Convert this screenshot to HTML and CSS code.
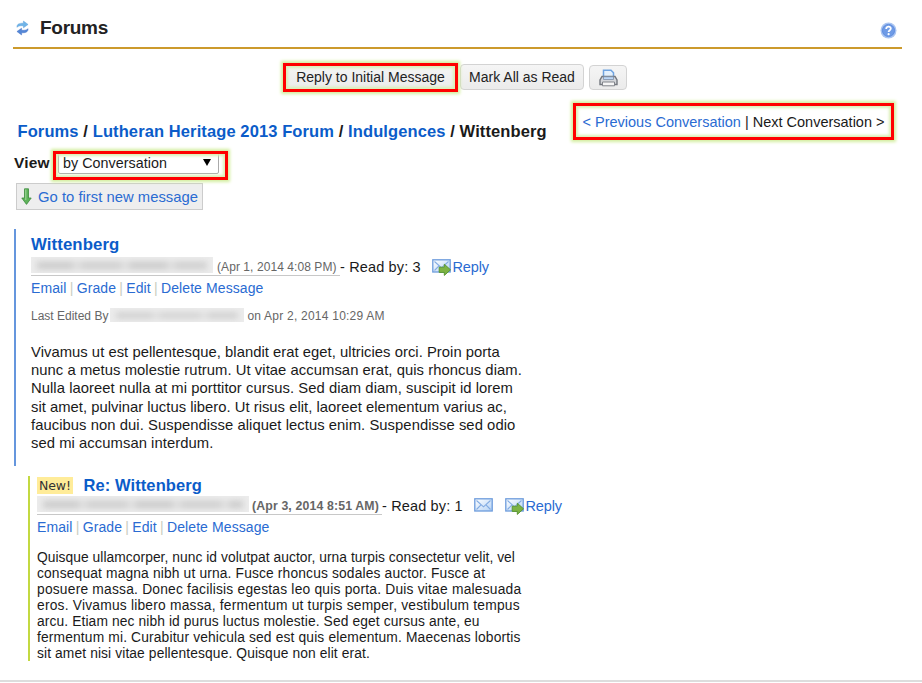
FILE: index.html
```html
<!DOCTYPE html>
<html lang="en">
<head>
<meta charset="utf-8">
<title>Forums</title>
<link rel="stylesheet" href="styles.css">
</head>
<body>
<svg class="defs" width="0" height="0" aria-hidden="true">
  <defs>
    <linearGradient id="sky" x1="0" y1="0" x2="1" y2="1"><stop offset="0" stop-color="#fff"/><stop offset="1" stop-color="#b4d2f5"/></linearGradient>
    <symbol id="mail" viewBox="0 0 19 14">
      <rect x=".8" y=".8" width="17.4" height="12.2" fill="url(#sky)" stroke="#6c9bdc" stroke-width="1.3"/>
      <path d="M2.5 2.5 L9.5 8.8 L16.5 2.5 M2.5 11.5 L7 6.8 M16.5 11.5 L12 6.8" fill="none" stroke="#82abe2" stroke-width="1.1"/>
    </symbol>
    <symbol id="reply" viewBox="0 0 19 17">
      <rect x=".8" y=".8" width="17.4" height="12.2" fill="url(#sky)" stroke="#6c9bdc" stroke-width="1.3"/>
      <path d="M2.5 2.5 L9.5 8.8 L16.5 2.5 M2.5 11.5 L7 6.8" fill="none" stroke="#82abe2" stroke-width="1.1"/>
      <path d="M7.2 8.2 H12.3 V5.2 L18.5 10.8 L12.3 16.4 V13.4 H7.2 Z" fill="#7db343" stroke="#5a9634" stroke-width="1"/>
    </symbol>
  </defs>
</svg>
<header class="header">
  <svg class="sync" viewBox="0 0 14 16"><path d="M1 7.2 C1 3.6 3.5 2.8 8 2.8 V.5 L13 4.2 L8 7.8 V5.6 C5 5.4 3 5.4 1 7.2Z" fill="#6fb4e8" stroke="#5a9edb" stroke-width=".5"/><path d="M13 8.8 C13 12.4 10.5 13.2 6 13.2 V15.5 L1 11.8 L6 8.2 V10.4 C9 10.6 11 10.6 13 8.8Z" fill="#5487d6" stroke="#416fc4" stroke-width=".5"/></svg>
  <h1 class="title">Forums</h1>
  <svg class="help" viewBox="0 0 17 17"><circle cx="8.5" cy="8.5" r="8" fill="#a9c4f1"/><circle cx="8.5" cy="8.5" r="6.1" fill="#6f9be6" stroke="#5485dc" stroke-width=".8"/><path d="M6.2 6.9 C6.2 3.7 11 3.9 10.8 6.8 C10.7 8.2 8.6 8.2 8.6 10" fill="none" stroke="#fff" stroke-width="1.8"/><circle cx="8.6" cy="12.2" r="1.1" fill="#fff"/></svg>
</header>
<div class="toolbar">
  <button class="btn btn-reply mark">Reply to Initial Message</button>
  <button class="btn btn-read">Mark All as Read</button>
  <button class="btn btn-print" aria-label="Print"><svg viewBox="0 0 19 18"><path d="M4.5 8 V1.2 H12 L14.5 3.7 V8Z" fill="#e3f0fd" stroke="#6fa3e0" stroke-width="1.5"/><path d="M3 7.5 H16 L18 11 V15.5 H1 V11Z" fill="#d4d6da" stroke="#73777e" stroke-width="1.4"/><path d="M4.5 7.8 H14.5 V10.5 H4.5Z" fill="#bcd7f6" stroke="#7d8fa8" stroke-width=".8"/><path d="M3.5 13 H15.5 V16.8 H3.5Z" fill="#f6f6f6" stroke="#83868c"/></svg></button>
</div>
<div class="crumb-row">
  <nav class="crumbs"><a>Forums</a> / <a>Lutheran Heritage 2013 Forum</a> / <a>Indulgences</a> / Wittenberg</nav>
  <nav class="pager mark"><a>&lt; Previous Conversation</a> | Next Conversation &gt;</nav>
</div>
<div class="view-row">
  <label class="view">View</label>
  <div class="select-wrap mark"><div class="select">by Conversation<svg class="caret" viewBox="0 0 8 7"><path d="M0 0 H8 L4 7Z"/></svg></div></div>
</div>
<a class="first-new"><svg viewBox="0 0 11 17"><path d="M3.5 .8 H7.5 V10 H10.2 L5.5 16.4 L.8 10 H3.5Z" fill="#5fb35a" stroke="#3c8a3d" stroke-width=".8"/><path d="M4.8 1.5 V12" stroke="#a5dba0" stroke-width="1"/></svg>Go to first new message</a>
<article class="post post-main">
  <h2>Wittenberg</h2>
  <div class="meta"><div class="author"><i class="hidden-name n1"></i><span class="date">(Apr 1, 2014 4:08 PM)</span></div><span class="read">- Read by: 3</span><svg class="ico-reply"><use href="#reply"/></svg><a class="reply">Reply</a></div>
  <div class="actions"><a>Email</a> <s>|</s> <a>Grade</a> <s>|</s> <a>Edit</a> <s>|</s> <a>Delete Message</a></div>
  <div class="edited"><span>Last Edited By</span><i class="hidden-name n2"></i><span class="edit-date">on Apr 2, 2014 10:29 AM</span></div>
  <p class="body">
    <span>Vivamus ut est pellentesque, blandit erat eget, ultricies orci. Proin porta</span>
    <span>nunc a metus molestie rutrum. Ut vitae accumsan erat, quis rhoncus diam.</span>
    <span>Nulla laoreet nulla at mi porttitor cursus. Sed diam diam, suscipit id lorem</span>
    <span>sit amet, pulvinar luctus libero. Ut risus elit, laoreet elementum varius ac,</span>
    <span>faucibus non dui. Suspendisse aliquet lectus enim. Suspendisse sed odio</span>
    <span>sed mi accumsan interdum.</span>
  </p>
</article>
<article class="post post-child">
  <h2><span class="new">New!</span>Re: Wittenberg</h2>
  <div class="meta"><div class="author"><i class="hidden-name n3"></i><span class="date">(Apr 3, 2014 8:51 AM)</span></div><span class="read">- Read by: 1</span><svg class="ico-mail"><use href="#mail"/></svg><svg class="ico-reply"><use href="#reply"/></svg><a class="reply">Reply</a></div>
  <div class="actions"><a>Email</a> <s>|</s> <a>Grade</a> <s>|</s> <a>Edit</a> <s>|</s> <a>Delete Message</a></div>
  <p class="body2">
    <span>Quisque ullamcorper, nunc id volutpat auctor, urna turpis consectetur velit, vel</span>
    <span>consequat magna nibh ut urna. Fusce rhoncus sodales auctor. Fusce at</span>
    <span>posuere massa. Donec facilisis egestas leo quis porta. Duis vitae malesuada</span>
    <span>eros. Vivamus libero massa, fermentum ut turpis semper, vestibulum tempus</span>
    <span>arcu. Etiam nec nibh id purus luctus molestie. Sed eget cursus ante, eu</span>
    <span>fermentum mi. Curabitur vehicula sed est quis elementum. Maecenas lobortis</span>
    <span>sit amet nisi vitae pellentesque. Quisque non elit erat.</span>
  </p>
</article>
<footer class="footer"></footer>
</body>
</html>
```
FILE: styles.css
```css
* { box-sizing: border-box; }
body { margin: 0; background: #fff; color: #1a1a1a; font-family: "Liberation Sans", Arial, sans-serif; font-size: 14.5px; overflow: hidden; white-space: nowrap; }
.defs { position: absolute; }
a { color: #2a6bd2; text-decoration: none; }
s { margin: 0 -.8px; color: #c9cdc0; text-decoration: none; }
.header { display: flex; align-items: center; height: 48.5px; margin: 0 20px 0 13px; padding: 9.5px 5px 0 3px; border-bottom: 2px solid #cc9a2c; }
.sync { width: 13px; height: 16px; }
.title { margin: 0 auto 0 11px; font-size: 19px; line-height: 24px; letter-spacing: -.28px; color: #222; }
.help { width: 17px; height: 17px; margin-top: 5px; }
.toolbar { display: flex; align-items: flex-start; height: 54.5px; padding: 15.5px 0 0 286px; }
.mark { position: relative; }
.mark::after { content: ""; position: absolute; border: 3px solid #f00; box-shadow: 0 0 3px 2px #d3ee9f, inset 0 0 3px 2px #d9efb4; }
.btn { display: flex; align-items: center; justify-content: center; padding: 0; height: 26px; border: 1px solid #d3d3d3; border-radius: 4px; background: linear-gradient(#f5f5f5, #ebebeb); color: #222; font: 14px "Liberation Sans", Arial, sans-serif; }
.btn-reply { width: 169px; margin-right: 5px; border-color: transparent; }
.btn-reply::after { inset: -2px -4px -3px -4px; }
.btn-read { width: 124px; margin-right: 5px; }
.btn-print { width: 38px; height: 25px; margin-top: 1px; }
.btn-print svg { width: 19px; height: 18px; }
.crumb-row { display: flex; justify-content: space-between; height: 48px; padding: 0 28px 0 17.5px; }
.crumbs { padding-top: 18px; font-size: 16.5px; line-height: 20px; font-weight: bold; letter-spacing: .104px; }
.crumbs a, h2 { color: #0b5cc9; }
.pager { width: 321px; height: 37px; padding: 9px 0 0 9.5px; line-height: 20px; }
.pager::after { inset: 0; }
.view-row { display: flex; height: 32px; padding-left: 14px; }
.view { width: 39px; padding-top: 2px; font-size: 15.5px; line-height: 20px; font-weight: bold; letter-spacing: .2px; }
.select-wrap { width: 175px; height: 29px; padding: 1px 0 0 5px; }
.select-wrap::after { inset: 0; }
.select { display: flex; align-items: center; justify-content: space-between; width: 161px; height: 22px; padding: 0 7px 0 4px; border: 1px solid #aaa; border-radius: 2px; font-size: 14.3px; letter-spacing: .04px; }
.caret { width: 8px; height: 7px; margin-bottom: 2px; }
.first-new { display: flex; align-items: center; width: 187px; height: 27px; margin-left: 16px; padding-left: 4px; border: 1px solid #ccc; background: #eee; font-size: 14.8px; letter-spacing: .02px; }
.first-new svg { width: 11px; height: 17px; margin-right: 6px; }
.post { display: flow-root; }
.post-main { height: 237px; margin: 19px 0 0 14px; padding-left: 15px; border-left: 2px solid #6596dd; }
.post-child { height: 185px; margin: 10px 0 0 28px; padding-left: 7px; border-left: 2px solid #c3d941; }
h2 { display: flex; align-items: center; margin: 5px 0 1px; height: 22px; font-size: 16.8px; letter-spacing: .09px; }
.post-child h2 { margin: -2px 0 0; font-size: 16.5px; letter-spacing: .1px; }
.meta { display: flex; height: 22px; line-height: 20px; }
.author { display: flex; width: 309px; height: 19px; border-bottom: 1px solid #c8c8c8; font-size: 12px; letter-spacing: .07px; color: #666; }
.post-child .author { width: 345px; font-size: 12.3px; font-weight: bold; letter-spacing: .14px; }
.hidden-name { position: relative; display: block; flex: none; height: 16px; background: #ececec; overflow: hidden; }
.hidden-name::after { content: ""; position: absolute; inset: 5px 6px 4px; background: repeating-linear-gradient(90deg, #c9c9c9 0 34px, #dedede 39px 41px, #cdcdcd 46px 82px, #e0e0e0 88px 90px, #c9c9c9 94px); filter: blur(3px); }
.n1 { width: 182px; margin-right: 4px; }
.n2 { width: 134px; height: 14px; margin: 0 3px 0 2px; }
.n3 { width: 212px; margin-right: 3px; }
.read { width: 92px; letter-spacing: .15px; }
.ico-reply { width: 19px; height: 17px; margin: 2px 1.5px 0 0; }
.ico-mail { width: 19px; height: 14px; margin: 2px 12px 0 0; }
.reply { letter-spacing: -.15px; }
.actions { height: 21px; font-size: 14px; line-height: 19px; letter-spacing: .1px; }
.edited { display: flex; height: 16px; margin-top: 8px; font-size: 12px; line-height: 16px; color: #666; }
.edit-date { letter-spacing: .23px; }
p { margin: 0; }
p span { display: block; }
.body { margin-top: 19px; font-size: 14.8px; line-height: 18.2px; letter-spacing: .055px; }
.body span:nth-child(1) { letter-spacing: .035px; }
.body span:nth-child(4) { letter-spacing: .018px; }
.body2 { margin-top: 10.5px; font-size: 13.8px; line-height: 16px; letter-spacing: .15px; }
.body2 span:nth-child(1) { letter-spacing: .05px; }
.body2 span:nth-child(3), .body2 span:nth-child(4) { letter-spacing: .21px; }
.body2 span:nth-child(5), .body2 span:nth-child(7) { letter-spacing: .11px; }
.new { margin-right: 10.5px; padding: 0 2px; background: #ffec99; font: 12.5px/17px "DejaVu Sans", Verdana, sans-serif; letter-spacing: -.1px; color: #333; }
.footer { height: 2px; margin-top: 19px; background: #ddd; }
```
